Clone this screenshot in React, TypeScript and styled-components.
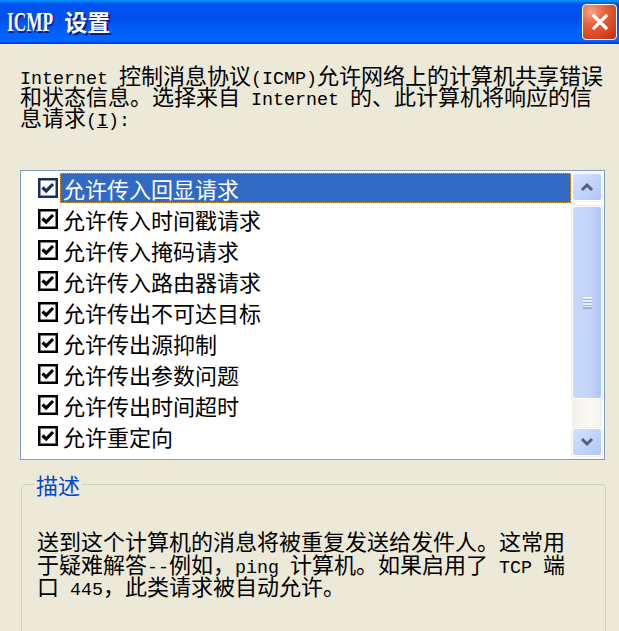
import React from "react";
import styled, {createGlobalStyle} from "styled-components";

const GlobalStyle = createGlobalStyle`
    html, body {
        margin: 0;
        padding: 0;
        background: #ECE9D8;
    }
    body {
        font-family: "Noto Sans CJK SC", "Noto Sans", sans-serif;
        font-size: 22px;
        color: #000;
    }
`

const rules = [
    "允许传入回显请求",
    "允许传入时间戳请求",
    "允许传入掩码请求",
    "允许传入路由器请求",
    "允许传出不可达目标",
    "允许传出源抑制",
    "允许传出参数问题",
    "允许传出时间超时",
    "允许重定向",
]

const CheckIcon = ({selected}: { selected: boolean }) => {
    const ink = selected ? "#1C2F5A" : "#000"
    return (
        <svg width="20" height="20" viewBox="0 0 20 20">
            <rect x="1.25" y="1.25" width="17.5" height="17.5" fill="#fff" stroke={ink} strokeWidth="2.5"/>
            <path d="M4.5 9.5 L8.2 13 L15 6" fill="none" stroke={ink} strokeWidth="3.2"/>
        </svg>
    )
}

const Chevron = ({down}: { down?: boolean }) => (
    <svg width="14" height="10" viewBox="0 0 14 10">
        <path d={down ? "M2 2 L7 7 L12 2" : "M2 8 L7 3 L12 8"} fill="none" stroke="#4D6185" strokeWidth="3"/>
    </svg>
)

export default function App() {
    return (
        <Window>
            <GlobalStyle/>
            <TitleBar>
                <Title><TitleLat>ICMP</TitleLat> 设置</Title>
                <CloseButton aria-label="close">
                    <svg width="20" height="20" viewBox="0 0 20 20">
                        <path d="M4 4 L16 16 M16 4 L4 16" stroke="#fff" strokeWidth="3.2" strokeLinecap="square"/>
                    </svg>
                </CloseButton>
            </TitleBar>
            <Content>
                <Intro>
                    <Line><Lat>Internet </Lat>控制消息协议<Lat>(ICMP)</Lat>允许网络上的计算机共享错误</Line>
                    <Line>和状态信息。选择来自<Lat> Internet </Lat>的、此计算机将响应的信</Line>
                    <Line>息请求<Lat>(<u>I</u>):</Lat></Line>
                </Intro>
                <ListBox>
                    <Rows>
                        {rules.map((r, i) => (
                            <Row key={r}>
                                <CheckIcon selected={i === 0}/>
                                <Label $selected={i === 0}>{r}</Label>
                            </Row>
                        ))}
                    </Rows>
                    <ScrollBar>
                        <ScrollButton><Chevron/></ScrollButton>
                        <Thumb>
                            <Grip/>
                        </Thumb>
                        <Track/>
                        <ScrollButton><Chevron down/></ScrollButton>
                    </ScrollBar>
                </ListBox>
                <GroupBox>
                    <Legend>描述</Legend>
                    <Desc>
                        <Line $h={22.5}>送到这个计算机的消息将被重复发送给发件人。这常用</Line>
                        <Line $h={22.5}>于疑难解答<Lat>--</Lat>例如，<Lat>ping </Lat>计算机。如果启用了<Lat> TCP </Lat>端</Line>
                        <Line $h={22.5}>口<Lat> 445</Lat>，此类请求被自动允许。</Line>
                    </Desc>
                </GroupBox>
            </Content>
        </Window>
    )
}

const Window = styled.div`
    width: 619px;
    height: 631px;
    overflow: hidden;
    background: #ECE9D8;
`
const TitleBar = styled.div`
    height: 44px;
    display: flex;
    align-items: center;
    justify-content: space-between;
    padding: 0 2px 0 7px;
    box-sizing: border-box;
    background: linear-gradient(180deg, #0997FF 0%, #0053EE 9%, #0050EE 40%, #0066FF 86%, #0066FF 92%, #005BFF 95%, #003DD7 98%, #003DD7 100%);
`
const Title = styled.div`
    color: #fff;
    font-weight: 700;
    font-size: 23px;
    line-height: 26px;
    text-shadow: 2px 2px 0 #0A1E8C;
    white-space: pre;
    margin-top: -2px;
`
const TitleLat = styled.span`
    display: inline-block;
    font-family: "Liberation Serif", serif;
    font-size: 27px;
    transform: scaleX(0.64);
    transform-origin: left center;
    margin-right: -20px;
`
const Lat = styled.span`
    font-family: "Liberation Mono", monospace;
    font-size: 18.33px;
`
const CloseButton = styled.button`
    width: 35px;
    height: 36px;
    padding: 0;
    display: flex;
    align-items: center;
    justify-content: center;
    border: 1.5px solid #fff;
    border-radius: 4px;
    background: radial-gradient(circle at 25% 20%, #F3A68B 0%, #E5643E 35%, #D2421C 75%, #B8300E 100%);
`
const Content = styled.div`
    padding: 20px 13px 0 20px;
`
const Intro = styled.div`
    line-height: 21px;
`
const Line = styled.div<{ $h?: number }>`
    white-space: pre;
    height: ${p => p.$h ?? 21}px;
    line-height: ${p => p.$h ?? 21}px;
`
const ListBox = styled.div`
    margin-top: 43px;
    width: 585px;
    height: 290px;
    box-sizing: border-box;
    border: 1px solid #7F9DB9;
    background: #fff;
    display: flex;
`
const Rows = styled.div`
    flex: 1;
    padding: 1px 0 0 17px;
`
const Row = styled.div`
    height: 31px;
    display: flex;
    align-items: center;
    gap: 2px;
`
const Label = styled.div<{ $selected: boolean }>`
    flex: 1;
    height: 30px;
    line-height: 28px;
    padding-left: 2px;
    box-sizing: border-box;
    color: ${p => p.$selected ? "#fff" : "#000"};
    background: ${p => p.$selected ? "#316AC5" : "transparent"};
    border: 1px dotted ${p => p.$selected ? "#E0A030" : "transparent"};
`
const ScrollBar = styled.div`
    width: 30px;
    padding: 2px 2px 3px 1px;
    display: flex;
    flex-direction: column;
`
const ScrollButton = styled.div`
    height: 28px;
    flex: none;
    box-sizing: border-box;
    border: 1px solid #fff;
    border-radius: 3px;
    background: linear-gradient(135deg, #D5E0FC 0%, #C3D4FB 50%, #B1C6F7 100%);
    box-shadow: 0 0 0 1px #EEF1FA;
    display: flex;
    align-items: center;
    justify-content: center;
`
const Thumb = styled.div`
    margin-top: 5px;
    height: 193px;
    flex: none;
    box-sizing: border-box;
    border: 1px solid #fff;
    border-radius: 3px;
    box-shadow: 0 0 0 1px #E6ECFA;
    background: linear-gradient(90deg, #C9D8FC 0%, #C4D5FB 60%, #B0C5F6 100%);
    display: flex;
    align-items: center;
    justify-content: center;
`
const Grip = styled.div`
    width: 9px;
    height: 12px;
    background: repeating-linear-gradient(180deg, #EEF3FE 0px, #EEF3FE 1.5px, #8CB0F8 1.5px, #8CB0F8 3px);
`
const Track = styled.div`
    flex: 1;
    background: linear-gradient(90deg, #F3F1EA 0%, #FBFAF6 60%, #F3F1EA 100%);
`
const GroupBox = styled.fieldset`
    margin: 13px 0 0 1px;
    padding: 34px 0 0 15px;
    height: 200px;
    border: 1px solid #D0D0BF;
    border-radius: 4px;
`
const Legend = styled.legend`
    margin-left: -3px;
    padding: 0 2px;
    color: #0046D5;
    line-height: 22px;
`
const Desc = styled.div``
